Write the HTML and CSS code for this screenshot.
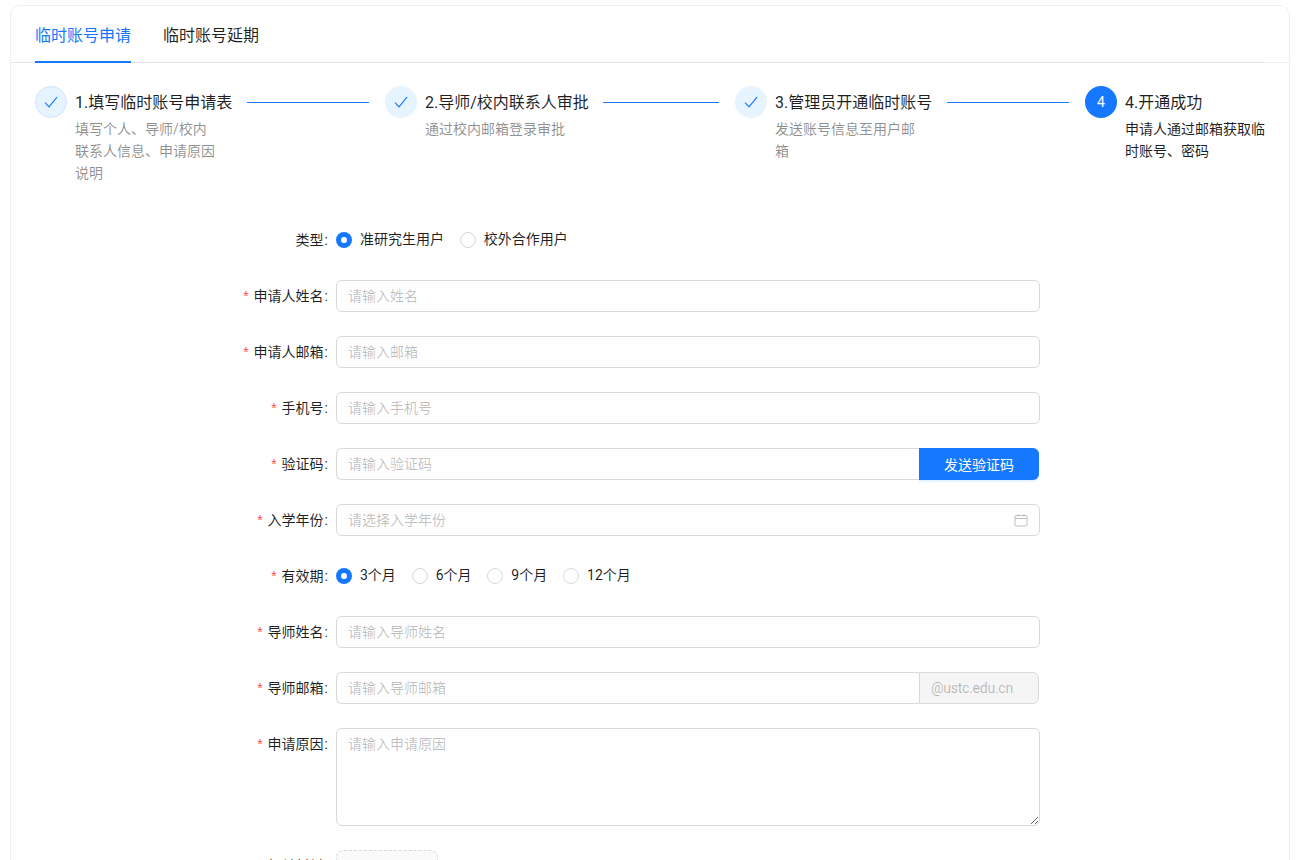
FILE: index.html
```html
<!DOCTYPE html>
<html>
    <head>
        <title>临时账号申请</title>
        <meta name="viewport" content="width=device-width, initial-scale=1">
        <link rel="stylesheet" href="styles.css">
    </head>
    <body>
        <div class="card">
            <!-- Tabs -->
            <div class="tabs-wrap">
                <div class="tabs">
                    <div class="tab active">临时账号申请</div>
                    <div class="tab">临时账号延期</div>
                </div>
            </div>

            <!-- Steps -->
            <div class="steps">
                <div class="step">
                    <div class="step-icon done first">
                        <svg width="14" height="14" viewBox="0 0 14 14"><path d="M1 7.6 L5 11.8 L13 2.2" fill="none" stroke="#1677ff" stroke-width="1.1"/></svg>
                    </div>
                    <div class="step-body">
                        <div class="step-title">1.填写临时账号申请表</div>
                        <div class="step-desc">填写个人、导师/校内联系人信息、申请原因说明</div>
                    </div>
                </div>
                <div class="step">
                    <div class="step-icon done">
                        <svg width="14" height="14" viewBox="0 0 14 14"><path d="M1 7.6 L5 11.8 L13 2.2" fill="none" stroke="#1677ff" stroke-width="1.1"/></svg>
                    </div>
                    <div class="step-body">
                        <div class="step-title">2.导师/校内联系人审批</div>
                        <div class="step-desc">通过校内邮箱登录审批</div>
                    </div>
                </div>
                <div class="step">
                    <div class="step-icon done">
                        <svg width="14" height="14" viewBox="0 0 14 14"><path d="M1 7.6 L5 11.8 L13 2.2" fill="none" stroke="#1677ff" stroke-width="1.1"/></svg>
                    </div>
                    <div class="step-body">
                        <div class="step-title">3.管理员开通临时账号</div>
                        <div class="step-desc">发送账号信息至用户邮箱</div>
                    </div>
                </div>
                <div class="step last">
                    <div class="step-icon current">4</div>
                    <div class="step-body">
                        <div class="step-title">4.开通成功</div>
                        <div class="step-desc current-desc">申请人通过邮箱获取临时账号、密码</div>
                    </div>
                </div>
            </div>

            <!-- Form -->
            <div class="form">
                <div class="row">
                    <label class="label">类型</label>
                    <div class="radios">
                        <span class="radio"><i class="dot checked"></i>准研究生用户</span>
                        <span class="radio"><i class="dot"></i>校外合作用户</span>
                    </div>
                </div>
                <div class="row">
                    <label class="label required">申请人姓名</label>
                    <input class="input" type="text" placeholder="请输入姓名">
                </div>
                <div class="row">
                    <label class="label required">申请人邮箱</label>
                    <input class="input" type="text" placeholder="请输入邮箱">
                </div>
                <div class="row">
                    <label class="label required">手机号</label>
                    <input class="input" type="text" placeholder="请输入手机号">
                </div>
                <div class="row">
                    <label class="label required">验证码</label>
                    <div class="group">
                        <input class="input joined" type="text" placeholder="请输入验证码">
                        <button class="send">发送验证码</button>
                    </div>
                </div>
                <div class="row">
                    <label class="label required">入学年份</label>
                    <div class="picker">
                        <input class="picker-input" type="text" placeholder="请选择入学年份">
                        <svg class="calendar" width="14" height="14" viewBox="0 0 14 14" fill="none" stroke="#bfbfbf" stroke-width="1">
                            <rect x="1" y="2.5" width="12" height="10.5" rx="1"/>
                            <path d="M1 5.5 H13 M4 1 V3.5 M10 1 V3.5"/>
                        </svg>
                    </div>
                </div>
                <div class="row">
                    <label class="label required">有效期</label>
                    <div class="radios">
                        <span class="radio"><i class="dot checked"></i>3个月</span>
                        <span class="radio"><i class="dot"></i>6个月</span>
                        <span class="radio"><i class="dot"></i>9个月</span>
                        <span class="radio"><i class="dot"></i>12个月</span>
                    </div>
                </div>
                <div class="row">
                    <label class="label required">导师姓名</label>
                    <input class="input" type="text" placeholder="请输入导师姓名">
                </div>
                <div class="row">
                    <label class="label required">导师邮箱</label>
                    <div class="group">
                        <input class="input joined" type="text" placeholder="请输入导师邮箱">
                        <span class="addon">@ustc.edu.cn</span>
                    </div>
                </div>
                <div class="row">
                    <label class="label required">申请原因</label>
                    <textarea class="textarea" placeholder="请输入申请原因"></textarea>
                </div>
                <div class="row">
                    <label class="label">相关材料</label>
                    <div class="upload"></div>
                </div>
            </div>
        </div>
    </body>
</html>
```

FILE: styles.css
```css
* {
    box-sizing: border-box;
}
html, body {
    height: 100%;
    overflow: hidden;
}
body {
    margin: 0;
    padding: 5px 9px 0 10px;
    background-color: #fff;
    color: rgba(0, 0, 0, 0.88);
    font-family: Roboto, "Noto Sans CJK SC", sans-serif;
    font-size: 14px;
}
.card {
    border: 1px solid #f0f0f0;
    border-radius: 10px;
    background-color: #fff;
    height: 1100px;
}
.tabs-wrap {
    height: 57px;
    border-bottom: 1px solid #f0f0f0;
}
.tabs {
    display: flex;
    gap: 32px;
    height: 57px;
    margin-right: 24px;
    padding-left: 24px;
    border-bottom: 1px solid #e4e4e4;
}
.tab {
    width: 96px;
    height: 57px;
    font-size: 16px;
    line-height: 59px;
}
.tab.active {
    color: #1677ff;
    border-bottom: 2px solid #1677ff;
}
.steps {
    display: flex;
    height: 161px;
    padding: 23px 24px 0 24px;
}
.step {
    display: flex;
    flex: 0 0 350px;
}
.step.last {
    flex: 0 0 180px;
}
.step-icon {
    flex: none;
    display: flex;
    align-items: center;
    justify-content: center;
    width: 32px;
    height: 32px;
    margin-right: 8px;
    border-radius: 50%;
}
.step-icon.done {
    background-color: #e6f4ff;
}
.step-icon.first {
    border: 1px solid #cfe6ff;
}
.step-icon.current {
    background-color: #1677ff;
    color: #fff;
    font-size: 14px;
}
.step-body {
    flex: 1;
}
.step-title {
    position: relative;
    display: inline-block;
    height: 32px;
    font-size: 16px;
    line-height: 34px;
    padding-right: 15px;
    white-space: nowrap;
}
.step-title::after {
    content: "";
    position: absolute;
    top: 16px;
    left: 100%;
    height: 1px;
    background-color: #1677ff;
}
.step:nth-child(1) .step-title::after {
    width: 122px;
}
.step:nth-child(2) .step-title {
    padding-right: 14px;
}
.step:nth-child(2) .step-title::after {
    width: 116px;
}
.step:nth-child(3) .step-title::after {
    width: 122px;
}
.step.last .step-title::after {
    display: none;
}
.step-desc {
    max-width: 140px;
    color: rgba(0, 0, 0, 0.45);
    line-height: 22px;
}
.step-desc.current-desc {
    color: rgba(0, 0, 0, 0.88);
}
.form {
    width: 1029px;
}
.row {
    display: flex;
    align-items: flex-start;
    margin-bottom: 24px;
}
.label {
    flex: none;
    width: 325px;
    height: 32px;
    line-height: 32px;
    text-align: right;
    white-space: nowrap;
}
.label::after {
    content: ":";
    margin: 0 8px 0 1px;
}
.label.required::before {
    content: "*";
    color: #ff4d4f;
    margin-right: 5px;
    font-family: "Liberation Sans", sans-serif;
}
.radios {
    display: flex;
    height: 32px;
}
.radio {
    display: flex;
    align-items: flex-start;
    height: 32px;
    margin-right: 15.8px;
    line-height: 30px;
}
.dot {
    width: 16px;
    height: 16px;
    margin-top: 8px;
    margin-right: 8px;
    border: 1px solid #d9d9d9;
    border-radius: 50%;
    background-color: #fff;
}
.dot.checked {
    border: 5px solid #1677ff;
}
.input, .textarea, .picker {
    flex: 1;
    min-width: 0;
    border: 1px solid #d9d9d9;
    border-radius: 6px;
    font-family: inherit;
    font-size: 14px;
    outline: none;
}
.input, .picker {
    height: 32px;
    padding: 4px 11px;
}
.input::placeholder, .textarea::placeholder, .picker-input::placeholder {
    color: rgba(0, 0, 0, 0.25);
}
.group {
    flex: 0 0 703px;
    display: flex;
}
.input.joined {
    border-right: none;
    border-radius: 6px 0 0 6px;
}
.send {
    width: 120px;
    height: 32px;
    border: none;
    border-radius: 0 6px 6px 0;
    background-color: #1677ff;
    color: #fff;
    font-family: inherit;
    font-size: 14px;
    box-shadow: 0 2px 0 rgba(5, 145, 255, 0.1);
}
.addon {
    width: 120px;
    height: 32px;
    padding: 0 11px;
    border: 1px solid #d9d9d9;
    border-radius: 0 6px 6px 0;
    background-color: rgba(0, 0, 0, 0.04);
    color: rgba(0, 0, 0, 0.25);
    letter-spacing: -0.25px;
    line-height: 30px;
}
.picker {
    display: flex;
    align-items: center;
    justify-content: space-between;
}
.picker-input {
    flex: 1;
    border: none;
    outline: none;
    padding: 0;
    font-family: inherit;
    font-size: 14px;
}
.textarea {
    height: 98px;
    padding: 4px 11px;
    line-height: 22px;
}
.upload {
    width: 102px;
    height: 102px;
    border: 1px dashed #d9d9d9;
    border-radius: 8px;
    background-color: rgba(0, 0, 0, 0.02);
}
```
